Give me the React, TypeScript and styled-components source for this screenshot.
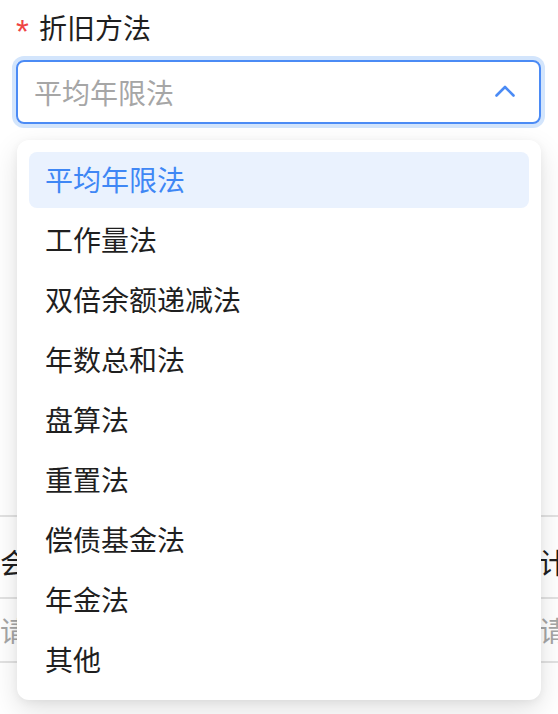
import styled, {createGlobalStyle} from 'styled-components';

const methods = [
    '平均年限法',
    '工作量法',
    '双倍余额递减法',
    '年数总和法',
    '盘算法',
    '重置法',
    '偿债基金法',
    '年金法',
    '其他',
];

const GlobalStyle = createGlobalStyle`
    html, body {
        margin: 0;
        padding: 0;
        background: #fff;
    }

    body {
        font-family: "PingFang SC", "Noto Sans CJK SC", "Noto Sans", sans-serif;
        color: #1f1f1f;
    }
`;

const App = () => {
    const selected = methods[0];

    return <Page>
        <GlobalStyle/>
        <Field>
            <Label><Required>*</Required>折旧方法</Label>
            <SelectBox>
                <Placeholder>{selected}</Placeholder>
                <Chevron viewBox="0 0 20 12" aria-hidden>
                    <polyline points="1.5,10.5 10,2 18.5,10.5"/>
                </Chevron>
            </SelectBox>

            <Menu>
                {methods.map((name) => (
                    <Option key={name} $active={name === selected}>{name}</Option>
                ))}
            </Menu>
        </Field>

        <Behind>
            <Row $kind="label">
                <span>会计科目</span>
                <span>计提方式</span>
            </Row>
            <Row $kind="value">
                <Muted>请选择</Muted>
                <Muted>请选择</Muted>
            </Row>
        </Behind>
    </Page>;
};

export default App;


const Page = styled.div`
    width: 558px;
    height: 714px;
    overflow: hidden;
    position: relative;
`;

const Field = styled.div`
    position: relative;
    padding: 7px 17px 0 16px;
    display: flex;
    flex-direction: column;
    gap: 13px;
`;

const Label = styled.div`
    font-size: 28px;
    line-height: 40px;
    display: flex;
    align-items: center;
`;

const Required = styled.span`
    color: #ef4444;
    font-family: "Liberation Sans", Arial, sans-serif;
    font-size: 33px;
    width: 23px;
    padding-left: 0;
    position: relative;
    top: 5px;
`;

const SelectBox = styled.div`
    height: 64px;
    box-sizing: border-box;
    border: 2px solid #4b8bf5;
    border-radius: 8px;
    box-shadow: 0 0 0 4px #d3e5fc;
    padding: 0 24px 0 16px;
    display: flex;
    align-items: center;
    justify-content: space-between;
`;

const Placeholder = styled.span`
    font-size: 28px;
    color: #a6a6a6;
`;

const Chevron = styled.svg`
    width: 20px;
    height: 12px;
    margin-bottom: 3px;
    fill: none;
    stroke: #4b8bf5;
    stroke-width: 2.6;
    stroke-linecap: round;
    stroke-linejoin: round;
`;

const Menu = styled.div`
    position: absolute;
    top: 140px;
    left: 17px;
    width: 524px;
    box-sizing: border-box;
    padding: 12px;
    background: #fff;
    border-radius: 12px;
    box-shadow: 0 10px 28px rgba(0, 0, 0, 0.12), 0 2px 8px rgba(0, 0, 0, 0.05);
    display: flex;
    flex-direction: column;
    gap: 4px;
    z-index: 2;
`;

const Option = styled.div<{ $active?: boolean }>`
    height: 56px;
    padding: 0 17px 2px 16px;
    box-sizing: border-box;
    border-radius: 8px;
    display: flex;
    align-items: center;
    font-size: 28px;
    color: ${({$active}) => ($active ? '#3f87f5' : '#1f1f1f')};
    background: ${({$active}) => ($active ? '#eaf2fe' : 'transparent')};
`;

const Behind = styled.div`
    margin-top: 391px;
    border-top: 2px solid #e2e2e2;
`;

const Row = styled.div<{ $kind: 'label' | 'value' }>`
    display: grid;
    grid-template-columns: 539px 1fr;
    white-space: nowrap;
    overflow: hidden;
    font-size: 28px;
    line-height: 28px;
    padding: ${({$kind}) => ($kind === 'label' ? '31px 0 21px' : '17px 0 17px')};
    border-bottom: 2px solid #e2e2e2;
`;

const Muted = styled.span`
    color: #a6a6a6;
`;
